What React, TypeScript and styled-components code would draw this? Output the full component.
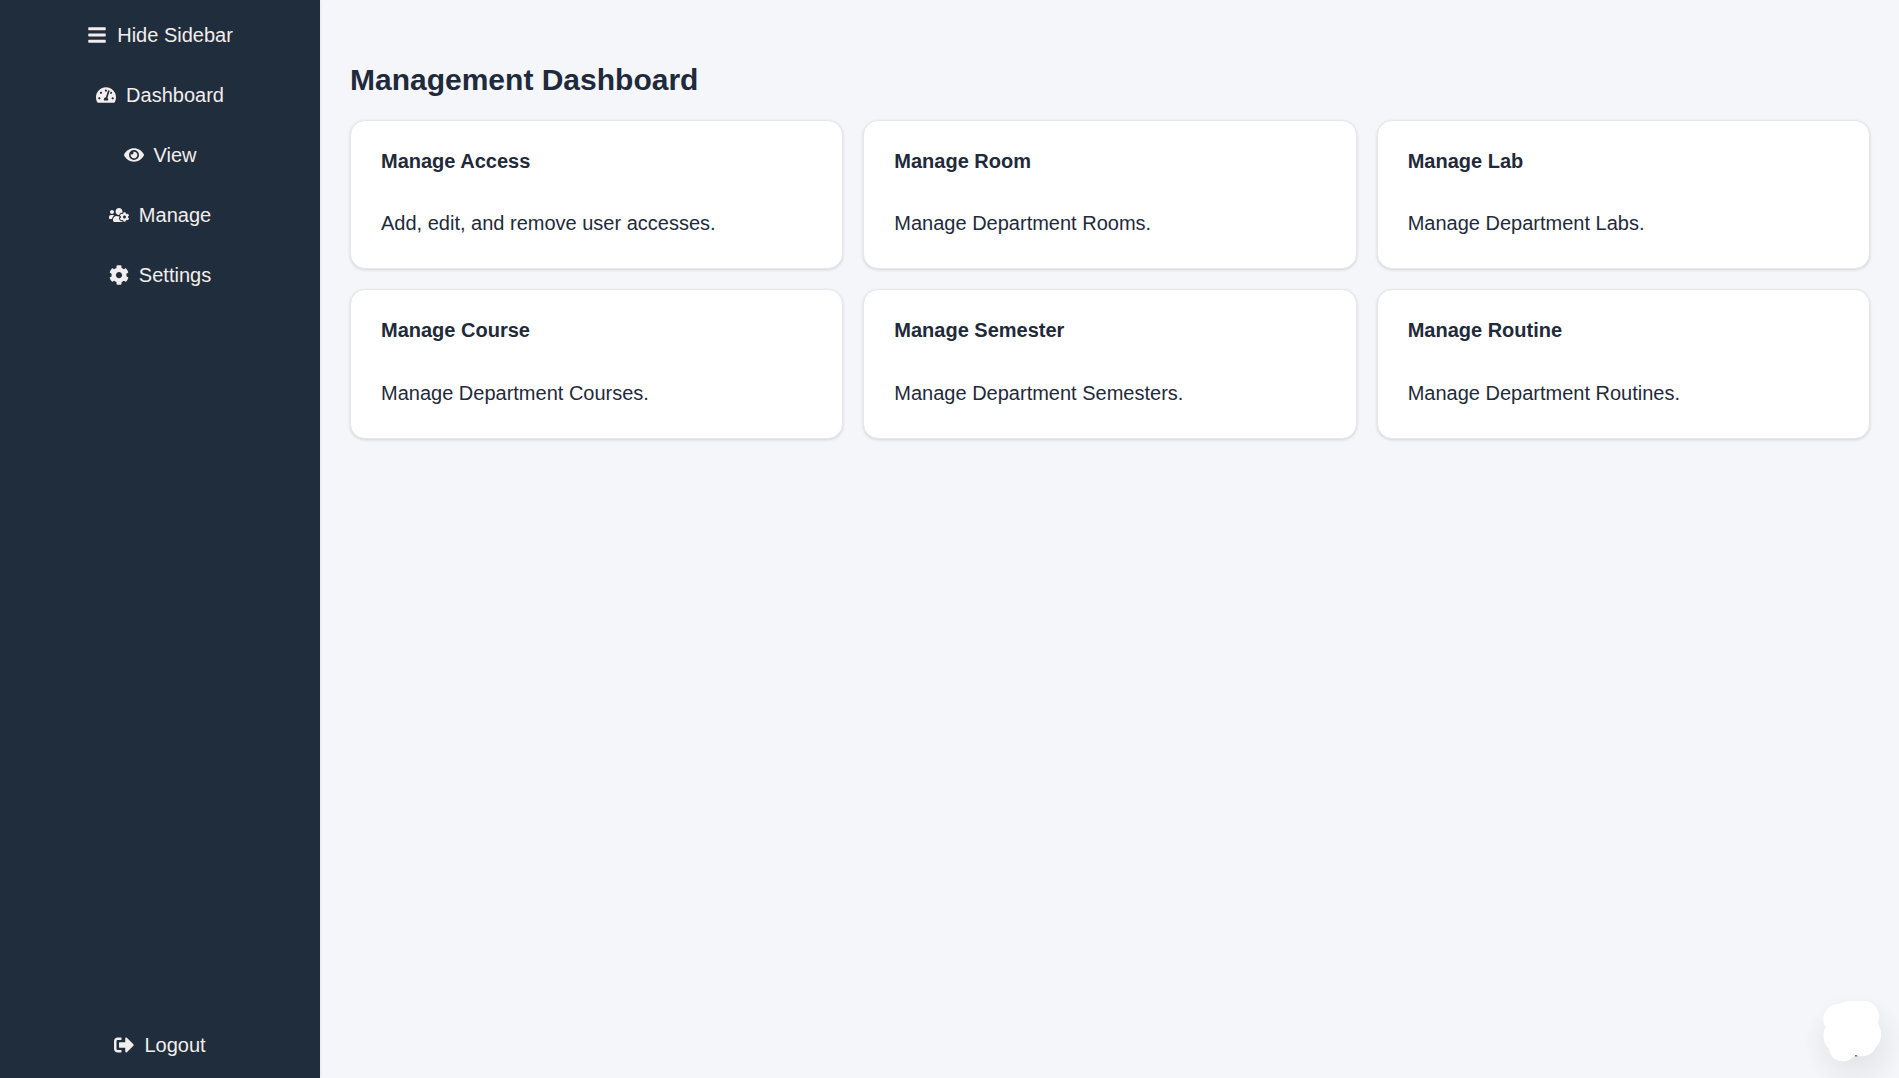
import React from "react";
import styled, { createGlobalStyle } from "styled-components";
import { FaBars, FaTachometerAlt, FaEye, FaUsersCog, FaCog, FaSignOutAlt } from "react-icons/fa";
import type { IconType } from "react-icons";

const GlobalStyle = createGlobalStyle`
  * { box-sizing: border-box; }
  body { margin: 0; overflow: hidden; font-family: "Liberation Sans", Arial, sans-serif; background: #f4f6fa; color: #1f2a3a; }
`;

const Layout = styled.div`
  display: flex;
  height: 100vh;
`;

const Sidebar = styled.nav`
  display: flex;
  flex-direction: column;
  width: 320px;
  flex: none;
  padding: 5px 0 3px;
  background: #202d3c;
  box-shadow: 1px 0 3px rgba(0, 0, 0, 0.06);
`;

const NavItem = styled.button<{ $last?: boolean }>`
  display: flex;
  align-items: center;
  justify-content: center;
  gap: 10px;
  height: 60px;
  border: 0;
  padding: 0;
  margin-top: ${(p) => (p.$last ? "auto" : "0")};
  background: none;
  color: #f3eded;
  font: 20px "Liberation Sans", Arial, sans-serif;
  cursor: pointer;
`;

const Main = styled.main`
  flex: 1;
  padding: 61px 29px 60px 30px;
`;

const Title = styled.h1`
  margin: 0 0 21px;
  font-size: 30px;
  line-height: 38px;
`;

const Grid = styled.section`
  display: grid;
  grid-template-columns: repeat(3, 1fr);
  gap: 20px;
`;

const Card = styled.article`
  height: 149.35px;
  padding: 28.6px 30px;
  background: #fff;
  border: 1px solid #e5e7eb;
  border-radius: 15px;
  box-shadow: 0 1px 3px rgba(0, 0, 0, 0.14);
`;

const CardTitle = styled.h2`
  margin: 0 0 39.7px;
  font-size: 20px;
  line-height: 23px;
`;

const CardText = styled.p`
  margin: 0;
  font-size: 20px;
  line-height: 23px;
`;

const ChatBubble = styled.svg`
  position: fixed;
  right: 0;
  bottom: 0;
  width: 110px;
  height: 110px;
  pointer-events: none;
`;

const nav: [string, IconType][] = [
  ["Hide Sidebar", FaBars],
  ["Dashboard", FaTachometerAlt],
  ["View", FaEye],
  ["Manage", FaUsersCog],
  ["Settings", FaCog],
];

const cards = [
  ["Manage Access", "Add, edit, and remove user accesses."],
  ["Manage Room", "Manage Department Rooms."],
  ["Manage Lab", "Manage Department Labs."],
  ["Manage Course", "Manage Department Courses."],
  ["Manage Semester", "Manage Department Semesters."],
  ["Manage Routine", "Manage Department Routines."],
];

export default function App() {
  return (
    <Layout>
      <GlobalStyle />
      <Sidebar>
        {nav.map(([label, Icon]) => (
          <NavItem key={label}><Icon />{label}</NavItem>
        ))}
        <NavItem $last><FaSignOutAlt />Logout</NavItem>
      </Sidebar>
      <Main>
        <Title>Management Dashboard</Title>
        <Grid>
          {cards.map(([title, text]) => (
            <Card key={title}>
              <CardTitle>{title}</CardTitle>
              <CardText>{text}</CardText>
            </Card>
          ))}
        </Grid>
      </Main>
      <ChatBubble viewBox="0 0 110 110" aria-hidden="true">
        <defs>
          <radialGradient id="halo">
            <stop offset="0.3" stopColor="#000" stopOpacity="0.06" />
            <stop offset="0.65" stopColor="#000" stopOpacity="0.03" />
            <stop offset="1" stopColor="#000" stopOpacity="0" />
          </radialGradient>
        </defs>
        <circle cx="66" cy="75" r="50" fill="url(#halo)" />
        <rect x="66" y="86.5" width="2.5" height="2" fill="#777" />
        <path fill="#fff" d="M50 36C54 34 58 33 64 33H75C84 33 90 41 90 48C90 51 89.5 53 89 55C91 59 92 63 92 67C92 72 90 76 87 79C84 85 80 88 73 88.3C70 88.5 68 87.5 67.5 87H66C63 91 59 93.3 54 93.3C46 93.3 41 88 39.5 80C36 77 34.5 72 34.5 67C34.5 64 35.5 61 37 59.5C35 57 34.3 55 34.3 51C34.3 43 41 36 50 36Z" />
      </ChatBubble>
    </Layout>
  );
}
